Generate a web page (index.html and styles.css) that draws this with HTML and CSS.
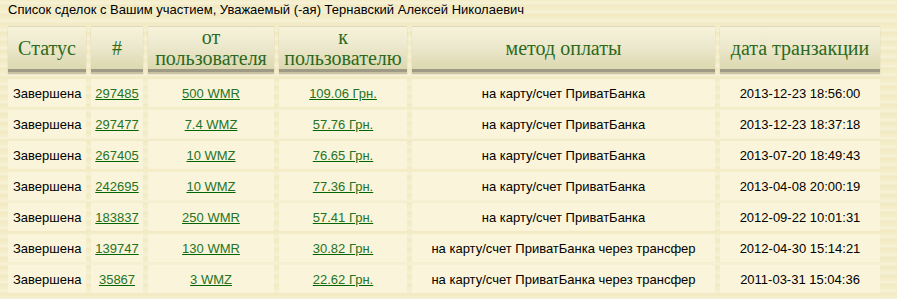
FILE: index.html
```html
<!DOCTYPE html>
<html lang="ru">
<head>
<meta charset="utf-8">
<title>Сделки</title>
<link rel="stylesheet" href="styles.css">
</head>
<body>
<div class="title">Список сделок с Вашим участием, Уважаемый (-ая) Тернавский Алексей Николаевич</div>
<table class="deals">
  <thead>
    <tr>
      <th class="c-status">Статус</th>
      <th class="c-id">#</th>
      <th class="c-from">от<br>пользователя</th>
      <th class="c-to">к<br>пользователю</th>
      <th class="c-method">метод оплаты</th>
      <th class="c-date">дата транзакции</th>
    </tr>
  </thead>
  <tbody>
    <tr><td>Завершена</td><td><a href="#">297485</a></td><td><a href="#">500 WMR</a></td><td><a href="#">109.06 Грн.</a></td><td>на карту/счет ПриватБанка</td><td>2013-12-23 18:56:00</td></tr>
    <tr><td>Завершена</td><td><a href="#">297477</a></td><td><a href="#">7.4 WMZ</a></td><td><a href="#">57.76 Грн.</a></td><td>на карту/счет ПриватБанка</td><td>2013-12-23 18:37:18</td></tr>
    <tr><td>Завершена</td><td><a href="#">267405</a></td><td><a href="#">10 WMZ</a></td><td><a href="#">76.65 Грн.</a></td><td>на карту/счет ПриватБанка</td><td>2013-07-20 18:49:43</td></tr>
    <tr><td>Завершена</td><td><a href="#">242695</a></td><td><a href="#">10 WMZ</a></td><td><a href="#">77.36 Грн.</a></td><td>на карту/счет ПриватБанка</td><td>2013-04-08 20:00:19</td></tr>
    <tr><td>Завершена</td><td><a href="#">183837</a></td><td><a href="#">250 WMR</a></td><td><a href="#">57.41 Грн.</a></td><td>на карту/счет ПриватБанка</td><td>2012-09-22 10:01:31</td></tr>
    <tr><td>Завершена</td><td><a href="#">139747</a></td><td><a href="#">130 WMR</a></td><td><a href="#">30.82 Грн.</a></td><td>на карту/счет ПриватБанка через трансфер</td><td>2012-04-30 15:14:21</td></tr>
    <tr><td>Завершена</td><td><a href="#">35867</a></td><td><a href="#">3 WMZ</a></td><td><a href="#">22.62 Грн.</a></td><td>на карту/счет ПриватБанка через трансфер</td><td>2011-03-31 15:04:36</td></tr>
  </tbody>
</table>
</body>
</html>
```

FILE: styles.css
```css
html, body {
  margin: 0;
  padding: 0;
}
body {
  background-color: #f4edc9;
  background-image: repeating-linear-gradient(180deg,
    rgba(255,255,255,0.0) 0px,
    rgba(255,255,255,0.25) 3px,
    rgba(230,215,160,0.18) 6px,
    rgba(255,255,255,0.0) 9px);
  font-family: "Liberation Sans", Arial, sans-serif;
  font-size: 13px;
  color: #000;
}
.title {
  padding: 2px 8px 0 8px;
  height: 19px;
  line-height: 16px;
}
.deals {
  border-collapse: separate;
  border-spacing: 5px 3px;
  margin: 2px 0 0 3px;
}
.deals th {
  font-family: "Liberation Serif", "Times New Roman", serif;
  font-weight: normal;
  font-size: 20px;
  line-height: 21px;
  color: #2c6a20;
  height: 42px;
  padding: 0 2px;
  background: linear-gradient(180deg, #f7f3da 0%, #eeead0 40%, #dcd8b0 100%);
  border-top: 1px solid #ddd8bb;
  border-bottom: 3px solid #9e9a86;
  box-shadow: 0 2px 1px rgba(120,115,90,0.35);
  vertical-align: middle;
}
.deals .c-status { width: 74px; }
.deals .c-id { width: 48px; }
.deals .c-from { width: 122px; }
.deals .c-to { width: 124px; }
.deals .c-method { width: 299px; }
.deals .c-date { width: 156px; }
.deals td {
  background: #faf5da;
  height: 28px;
  padding: 0 4px;
  text-align: center;
  vertical-align: middle;
  white-space: nowrap;
}
.deals td:first-child {
  text-align: left;
  padding-left: 5px;
}
.deals tbody tr:first-child td {
  border-top: 4px solid transparent;
  background-clip: padding-box;
}
.deals a {
  color: #267326;
  text-decoration: underline;
  text-decoration-color: #006400;
}
```
